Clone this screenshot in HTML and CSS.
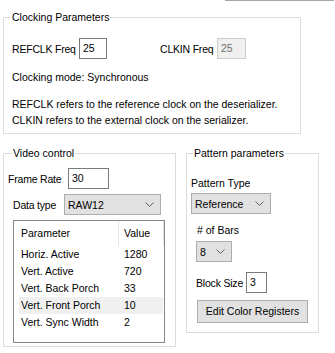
FILE: index.html
```html
<!DOCTYPE html>
<html>
  <head>
    <link rel="stylesheet" href="styles.css">
  </head>
  <body>
    <div class="top-rule"></div>

    <fieldset class="group clocking">
      <legend>Clocking Parameters</legend>
      <div class="row">
        <label class="lbl-ref">REFCLK Freq</label>
        <div class="textbox tb-ref">25</div>
        <label class="lbl-clk">CLKIN Freq</label>
        <div class="textbox tb-clk disabled">25</div>
      </div>
      <div class="mode">Clocking mode: Synchronous</div>
      <div class="note">
        REFCLK refers to the reference clock on the deserializer.<br />
        CLKIN refers to the external clock on the serializer.
      </div>
    </fieldset>

    <div class="lower">
      <fieldset class="group video">
        <legend>Video control</legend>
        <div class="row">
          <label class="lbl-rate">Frame Rate</label>
          <div class="textbox tb-rate">30</div>
        </div>
        <div class="row data-row">
          <label class="lbl-type">Data type</label>
          <div class="combo combo-type">
            <span>RAW12</span>
            <svg width="9" height="5" viewBox="0 0 9 5"><path d="M0.5 0.5 L4.5 4.5 L8.5 0.5" fill="none" stroke="#606060" stroke-width="1"/></svg>
          </div>
        </div>

        <div class="listbox">
          <div class="list-head">
            <div class="col-name">Parameter</div>
            <div class="col-val">Value</div>
          </div>
          <div class="list-row"><span class="cell-name">Horiz. Active</span><span>1280</span></div>
          <div class="list-row"><span class="cell-name">Vert. Active</span><span>720</span></div>
          <div class="list-row"><span class="cell-name">Vert. Back Porch</span><span>33</span></div>
          <div class="list-row hover"><span class="cell-name">Vert. Front Porch</span><span>10</span></div>
          <div class="list-row"><span class="cell-name">Vert. Sync Width</span><span>2</span></div>
        </div>
      </fieldset>

      <fieldset class="group pattern">
        <legend>Pattern parameters</legend>
        <div class="plabel">Pattern Type</div>
        <div class="combo combo-pattern">
          <span>Reference</span>
          <svg width="9" height="5" viewBox="0 0 9 5"><path d="M0.5 0.5 L4.5 4.5 L8.5 0.5" fill="none" stroke="#606060" stroke-width="1"/></svg>
        </div>
        <div class="plabel bars-label"># of Bars</div>
        <div class="combo combo-bars">
          <span>8</span>
          <svg width="9" height="5" viewBox="0 0 9 5"><path d="M0.5 0.5 L4.5 4.5 L8.5 0.5" fill="none" stroke="#606060" stroke-width="1"/></svg>
        </div>
        <div class="row block-row">
          <label class="lbl-block">Block Size</label>
          <div class="textbox tb-block">3</div>
        </div>
        <div class="button">Edit Color Registers</div>
      </fieldset>
    </div>
  </body>
</html>
```

FILE: styles.css
```css
body {
  margin: 0;
  font-family: "Liberation Sans", Arial, sans-serif;
  font-size: 10.5px;
  line-height: 16px;
  color: #000;
  background: #fff;
}

.top-rule {
  margin-left: 225px;
  width: 109px;
  height: 1px;
  background: #a8a8a8;
}

/* Group boxes */
.group {
  box-sizing: border-box;
  border: 1px solid #dcdcdc;
  margin: 0;
  min-width: 0;
}

.group legend {
  padding: 0 1px;
  line-height: 14px;
}

.clocking {
  width: 298px;
  margin: 9px 0 0 3px;
  padding: 14px 8px 5px 8px;
}

.clocking legend {
  margin-left: -1px;
}

.row {
  display: flex;
  align-items: center;
  height: 21px;
}

.row label {
  flex-shrink: 0;
  white-space: nowrap;
  letter-spacing: -0.2px;
}

.textbox {
  box-sizing: border-box;
  flex-shrink: 0;
  height: 21px;
  border: 1px solid #7a7a7a;
  padding-left: 3px;
  line-height: 19px;
  background: #fff;
}

.textbox.disabled {
  border-color: #cccccc;
  background: #f0f0f0;
  color: #6d6d6d;
}

.lbl-ref {
  width: 67px;
}

.tb-ref {
  width: 28px;
}

.lbl-clk {
  margin-left: 53px;
  width: 57px;
}

.tb-clk {
  width: 29px;
}

.mode {
  margin-top: 10px;
}

.note {
  margin-top: 11px;
  white-space: nowrap;
}

.lower {
  display: flex;
  align-items: flex-start;
  gap: 10px;
  margin: 12px 0 0 3px;
}

/* Video control */
.video {
  width: 173px;
  padding: 8px 4px 3px 4px;
}

.video legend {
  margin-left: 4px;
}

.lbl-rate {
  width: 60px;
}

.tb-rate {
  width: 41px;
}

.data-row {
  margin-top: 5px;
}

.lbl-type {
  margin-left: 5px;
  width: 51px;
}

.combo {
  box-sizing: border-box;
  flex-shrink: 0;
  display: flex;
  align-items: center;
  justify-content: space-between;
  height: 21px;
  border: 1px solid #adadad;
  background: #e1e1e1;
  padding: 0 6px 0 3px;
}

.combo svg {
  display: block;
}

.combo-type {
  width: 97px;
}

.listbox {
  box-sizing: border-box;
  width: 152px;
  height: 123px;
  margin: 5px 0 0 5px;
  border: 1px solid #828790;
}

.list-head {
  display: flex;
  height: 25px;
  line-height: 25px;
}

.col-name {
  width: 97px;
  padding-left: 7px;
  border-right: 1px solid #e5e5e5;
}

.col-val {
  width: 39px;
  padding-left: 5px;
  border-right: 1px solid #e5e5e5;
}

.list-row {
  display: flex;
  height: 17px;
  line-height: 17px;
  margin: 0 1px 0 5px;
  padding-left: 2px;
  white-space: nowrap;
}

.list-row.hover {
  background: #f0f0f0;
}

.cell-name {
  width: 103px;
}

/* Pattern parameters */
.pattern {
  width: 133px;
  padding: 15px 4px 9px 4px;
}

.pattern legend {
  margin-left: 2px;
}

.combo-pattern {
  width: 80px;
  margin-top: 2px;
}

.bars-label {
  margin: 8px 0 0 6px;
}

.combo-bars {
  width: 36px;
  margin: 3px 0 0 5px;
}

.block-row {
  margin: 10px 0 0 5px;
}

.lbl-block {
  width: 50px;
}

.tb-block {
  width: 21px;
}

.button {
  box-sizing: border-box;
  width: 111px;
  height: 23px;
  margin: 7px 0 0 6px;
  border: 1px solid #adadad;
  background: #e1e1e1;
  text-align: center;
  line-height: 21px;
  white-space: nowrap;
}
```
